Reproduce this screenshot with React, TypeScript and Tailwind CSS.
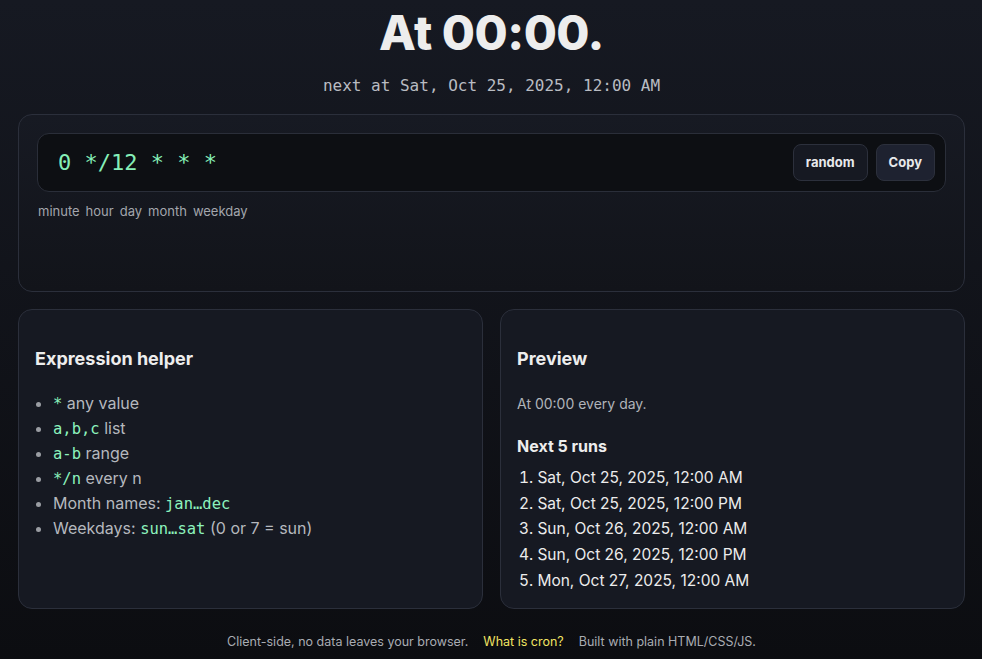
const mono = 'font-["DejaVu_Sans_Mono","Liberation_Mono",monospace]';

function Code({ children }: { children: React.ReactNode }) {
  return <code className={`${mono} text-[15.5px] leading-[1] text-[#8cf2bd]`}>{children}</code>;
}

const runs = [
  'Sat, Oct 25, 2025, 12:00 AM',
  'Sat, Oct 25, 2025, 12:00 PM',
  'Sun, Oct 26, 2025, 12:00 AM',
  'Sun, Oct 26, 2025, 12:00 PM',
  'Mon, Oct 27, 2025, 12:00 AM',
];

export default function App() {
  return (
    <div className='min-h-[659px] bg-gradient-to-b from-[#161922] to-[#0c0d11] font-["Inter",sans-serif] text-[#ececec]'>
      <div className="pl-[18px] pr-[17px]">
        <header className="flex flex-col items-center pt-[9px]">
          <h1 className="text-[48px] leading-[48px] font-extrabold tracking-[-0.5px] text-[#ededed]">At 00:00.</h1>
          <p className={`${mono} mt-[18px] text-[16px] leading-[22px] text-[#b9bcc2]`}>
            next at Sat, Oct 25, 2025, 12:00 AM
          </p>
        </header>

        <section className="mt-[17px] h-[178px] rounded-[14px] border border-[#2b2f3b] bg-gradient-to-b from-[#171a23] to-[#12141a] px-[18px] pt-[18px]">
          <div className="flex h-[59px] items-center justify-between rounded-[12px] border border-[#2a2e39] bg-[#0d0f13] pl-[20px] pr-[10px]">
            <span className={`${mono} text-[22px] text-[#86efb8]`}>0 */12 * * *</span>
            <div className="flex gap-2">
              <button className="h-[37px] rounded-[8px] border border-[#2c303c] bg-[#161922] px-[12px] text-[13px] font-bold text-[#e8e9ec]">
                random
              </button>
              <button className="h-[37px] rounded-[8px] border border-[#2c303c] bg-[#1e2230] px-[12px] text-[13px] font-bold text-[#e8e9ec]">
                Copy
              </button>
            </div>
          </div>
          <div className="mt-[10px] flex gap-[6px] pl-[1px] text-[13px] text-[#a3a6ad]">
            <span>minute</span>
            <span>hour</span>
            <span>day</span>
            <span>month</span>
            <span>weekday</span>
          </div>
        </section>

        <div className="mt-[17px] grid grid-cols-2 gap-[17px]">
          <section className="rounded-[14px] border border-[#2b2f3b] bg-[#161922] px-[16px] pt-[35px]">
            <h2 className="text-[18px] leading-[28px] font-bold text-[#ededed]">Expression helper</h2>
            <ul className="mt-[18px] list-disc pl-[18px] text-[16px] leading-[25px] text-[#b5b8be] marker:text-[#9a9da3]">
              <li><Code>*</Code> any value</li>
              <li><Code>a,b,c</Code> list</li>
              <li><Code>a-b</Code> range</li>
              <li><Code>*/n</Code> every n</li>
              <li>Month names: <Code>jan…dec</Code></li>
              <li>Weekdays: <Code>sun…sat</Code> (0 or 7 = sun)</li>
            </ul>
          </section>

          <section className="rounded-[14px] border border-[#2b2f3b] bg-[#161922] px-[16px] pt-[35px] pb-[14px]">
            <h2 className="text-[18px] leading-[28px] font-bold text-[#ededed]">Preview</h2>
            <p className="mt-[21px] text-[14px] leading-[20px] text-[#b0b3b9]">At 00:00 every day.</p>
            <h3 className="mt-[20px] text-[16px] leading-[24px] font-bold text-[#ededed]">Next 5 runs</h3>
            <ol className="mt-[7px] list-inside list-decimal pl-[2px] text-[15.5px] leading-[25.7px] text-[#ececec]">
              {runs.map((r) => (
                <li key={r}>{r}</li>
              ))}
            </ol>
          </section>
        </div>

        <footer className="flex justify-center gap-[15px] pt-[24px] text-[12.5px] text-[#a9acb2]">
          <span>Client-side, no data leaves your browser.</span>
          <a className="text-[#f2e463]">What is cron?</a>
          <span>Built with plain HTML/CSS/JS.</span>
        </footer>
      </div>
    </div>
  );
}
